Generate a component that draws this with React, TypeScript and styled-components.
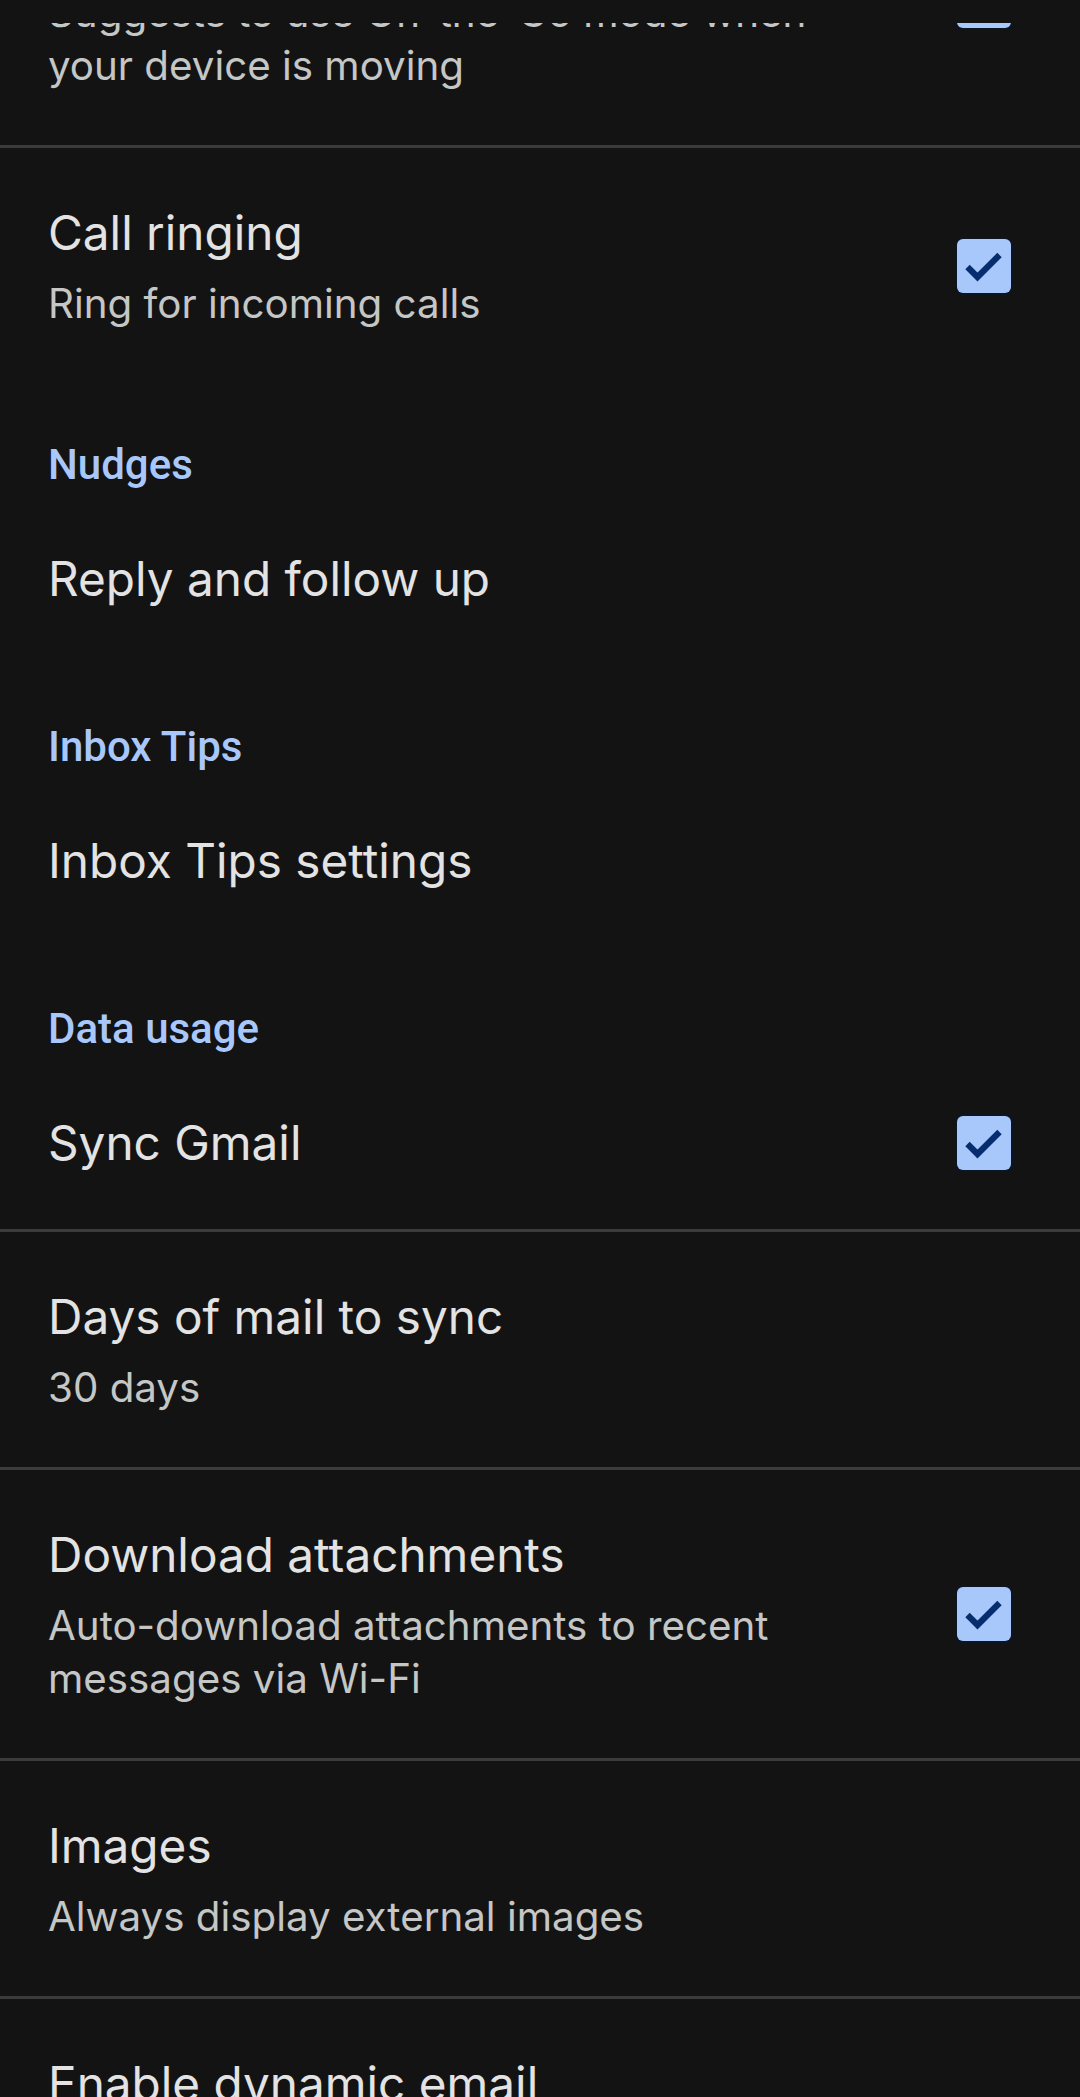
import React from "react";
import styled, { createGlobalStyle } from "styled-components";

const GlobalStyle = createGlobalStyle`
  html, body {
    margin: 0;
    padding: 0;
    background: #131314;
  }
  body {
    font-family: "Inter", "Roboto", sans-serif;
    -webkit-font-smoothing: antialiased;
  }
`;

const Screen = styled.div`
  width: 1080px;
  height: 2097px;
  background: #131314;
  display: flex;
  flex-direction: column;
  overflow: hidden;
`;

const TopBar = styled.header`
  flex: none;
  height: 23px;
  background: #131314;
`;

const Viewport = styled.div`
  flex: 1;
  min-height: 0;
  overflow: hidden;
`;

const List = styled.main`
  display: flex;
  flex-direction: column;
  margin-top: -166px;
`;

const Row = styled.div<{ $divider?: boolean }>`
  display: flex;
  align-items: center;
  padding: 53px 69px 53px 48px;
  min-height: 172px;
  box-sizing: border-box;
  border-bottom: ${(p) => (p.$divider ? "3px solid #3b3b3c" : "none")};
`;

const SingleRow = styled(Row)`
  padding-top: 54px;
  padding-bottom: 54px;
`;

const TextCol = styled.div`
  flex: 1;
  min-width: 0;
  display: flex;
  flex-direction: column;
  gap: 12px;
  padding-right: 40px;
`;

const Title = styled.div`
  font-family: "Inter", sans-serif;
  font-size: 47.7px;
  line-height: 64px;
  font-weight: 400;
  color: #e3e3e3;
  white-space: nowrap;
`;

const Summary = styled.div`
  font-family: "Inter", sans-serif;
  font-size: 40.3px;
  line-height: 53px;
  font-weight: 400;
  color: #c4c7c5;
`;

const Category = styled.div`
  padding: 54px 48px 0;
  height: 110px;
  box-sizing: border-box;
  font-family: "Roboto", sans-serif;
  font-size: 42px;
  line-height: 56px;
  font-weight: 500;
  color: #a8c7fa;
`;

const Box = styled.div`
  flex: none;
  width: 54px;
  height: 54px;
  border-radius: 6px;
  background: #a8c7fa;
  box-shadow: 0 0 0 2px #0d1424;
  display: flex;
  align-items: center;
  justify-content: center;
`;

function Checkbox() {
  return (
    <Box role="checkbox" aria-checked="true">
      <svg width="54" height="54" viewBox="0 0 54 54" aria-hidden="true">
        <polyline
          points="10.5,28 20.5,38 42.5,16"
          fill="none"
          stroke="#062e6f"
          strokeWidth="6.2"
          strokeLinecap="butt"
          strokeLinejoin="miter"
        />
      </svg>
    </Box>
  );
}

type Pref = {
  title: string;
  summary?: React.ReactNode;
  checked?: boolean;
  divider?: boolean;
};

function Preference({ title, summary, checked, divider }: Pref) {
  const RowEl = summary ? Row : SingleRow;
  return (
    <RowEl $divider={divider}>
      <TextCol>
        <Title>{title}</Title>
        {summary && <Summary>{summary}</Summary>}
      </TextCol>
      {checked && <Checkbox />}
    </RowEl>
  );
}

export default function App() {
  return (
    <>
      <GlobalStyle />
      <Screen>
        <TopBar />
        <Viewport>
          <List>
            <Preference
              title="On-the-Go mode"
              summary={
                <>
                  Suggests to use On-the-Go mode when
                  <br />
                  your device is moving
                </>
              }
              checked
              divider
            />
            <Preference title="Call ringing" summary="Ring for incoming calls" checked />

            <Category>Nudges</Category>
            <Preference title="Reply and follow up" />

            <Category>Inbox Tips</Category>
            <Preference title="Inbox Tips settings" />

            <Category>Data usage</Category>
            <Preference title="Sync Gmail" checked divider />
            <Preference title="Days of mail to sync" summary="30 days" divider />
            <Preference
              title="Download attachments"
              summary={
                <>
                  Auto-download attachments to recent
                  <br />
                  messages via Wi-Fi
                </>
              }
              checked
              divider
            />
            <Preference title="Images" summary="Always display external images" divider />
            <Preference title="Enable dynamic email" summary="Display dynamic content when available" />
          </List>
        </Viewport>
      </Screen>
    </>
  );
}
